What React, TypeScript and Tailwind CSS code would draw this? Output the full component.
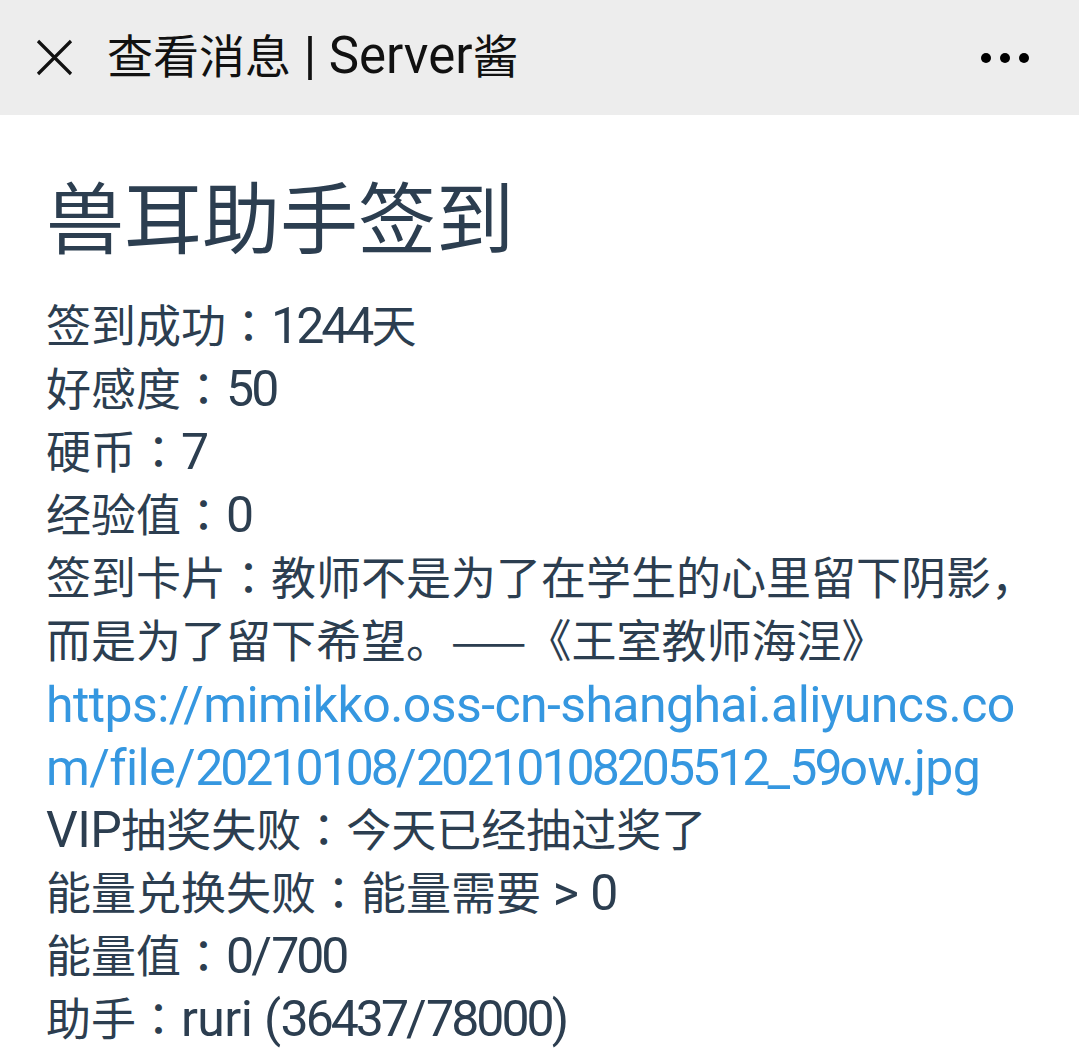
import * as React from 'react';

const lines: string[] = [
  '签到成功：1244天',
  '好感度：50',
  '硬币：7',
  '经验值：0',
  '签到卡片：教师不是为了在学生的心里留下阴影，而是为了留下希望。——《王室教师海涅》',
  'VIP抽奖失败：今天已经抽过奖了',
  '能量兑换失败：能量需要 > 0',
  '能量值：0/700',
  '助手：ruri (36437/78000)',
];

const link = 'https://mimikko.oss-cn-shanghai.aliyuncs.com/file/20210108/20210108205512_59ow.jpg';

const CJK = /([\u2014\u3000-\u303f\u4e00-\u9fff\uff00-\uffef]+)/;

// digits on the phone font are narrower than Roboto's
const Latin = ({ text }: { text: string }) => (
  <>
    {text.split(/(\d+)/).map((p, i) =>
      /^\d+$/.test(p) ? (
        <span key={i} className="tracking-[-3px]">
          {p}
        </span>
      ) : (
        p
      )
    )}
  </>
);

// Latin runs are drawn a bit larger than the CJK ones, like on the phone.
// Inner spans get line-height 0 so the row height stays that of the parent.
const Mixed = ({ text, latin }: { text: string; latin: string }) => (
  <>
    {text.split(CJK).map((part, i) => {
      if (!part) return null;
      if (!CJK.test(part)) {
        return (
          <span key={i} className={latin}>
            <Latin text={part} />
          </span>
        );
      }
      return (
        <span key={i} className="font-['Noto_Sans_CJK_SC'] leading-[0]">
          {part.split(/(：)/).map((p, j) =>
            p === '：' ? (
              <span key={j} className="font-['Noto_Sans_CJK_TC']">
                ：
              </span>
            ) : (
              p
            )
          )}
        </span>
      );
    })}
  </>
);

const Header = () => (
  <div className="flex h-[115px] items-center bg-[#ededed] text-[#111]">
    <div className="flex w-[107px] shrink-0 items-center pl-[36px]">
      <svg width="37" height="37" viewBox="0 0 37 37" fill="none" stroke="#111" strokeWidth="3.2">
        <path d="M2 2L35 35M35 2L2 35" />
      </svg>
    </div>
    <div className="flex-1 text-[46px] leading-[60px] pb-[2px]">
      <Mixed text="查看消息 | Server酱" latin="text-[51px] leading-[0]" />
    </div>
    <div className="flex items-center gap-[9px] pr-[50px]">
      <span className="block h-[10px] w-[10px] rounded-full bg-black" />
      <span className="block h-[10px] w-[10px] rounded-full bg-black" />
      <span className="block h-[10px] w-[10px] rounded-full bg-black" />
    </div>
  </div>
);

export default function App() {
  return (
    <div
      className="h-[1055px] w-[1079px] overflow-hidden bg-white"
      style={{ fontFamily: 'Roboto, "Noto Sans CJK SC", sans-serif' }}
    >
      <Header />
      <div className="pl-[46px] pr-[40px] pt-[54px] text-[#2c3e50]">
        <h1 className="text-[78px] leading-[91px] mb-[36px] font-['Noto_Sans_CJK_SC']">兽耳助手签到</h1>
        <div className="text-[45px] leading-[63px]">
          {lines.slice(0, 5).map((l) => (
            <div key={l}>
              <Mixed text={l} latin="text-[50px] leading-[0] tracking-[-0.6px]" />
            </div>
          ))}
          <div className="break-all text-[50px] tracking-[-0.6px] text-[#3597e0]">
            <Latin text={link} />
          </div>
          {lines.slice(5).map((l) => (
            <div key={l}>
              <Mixed text={l} latin="text-[50px] leading-[0] tracking-[-0.6px]" />
            </div>
          ))}
        </div>
      </div>
    </div>
  );
}
